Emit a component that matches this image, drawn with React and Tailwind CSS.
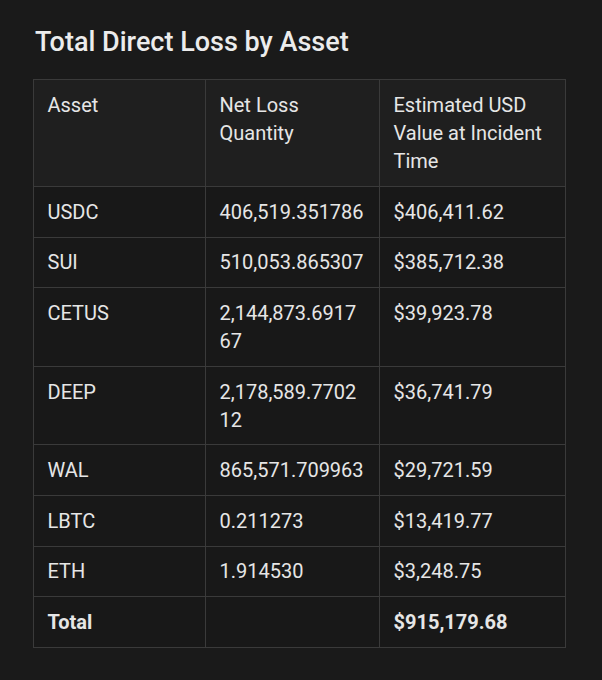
import React from 'react';

const rows = [
  { asset: 'USDC', qty: '406,519.351786', usd: '$406,411.62' },
  { asset: 'SUI', qty: '510,053.865307', usd: '$385,712.38' },
  { asset: 'CETUS', qty: '2,144,873.691767', usd: '$39,923.78' },
  { asset: 'DEEP', qty: '2,178,589.770212', usd: '$36,741.79' },
  { asset: 'WAL', qty: '865,571.709963', usd: '$29,721.59' },
  { asset: 'LBTC', qty: '0.211273', usd: '$13,419.77' },
  { asset: 'ETH', qty: '1.914530', usd: '$3,248.75' },
];

const cell = 'border border-[#3a3a3a] px-[13.5px] align-top [overflow-wrap:anywhere]';
const body = `${cell} py-[10.8px]`;

const App = () => {
  return (
    <div
      className="min-h-screen bg-[#1a1a1a] text-[#e6e6e6] pl-[33px] pr-[37px] pt-[26px]"
      style={{ fontFamily: 'Roboto, "Noto Sans", sans-serif' }}
    >
      <h2 className="text-[27px] leading-[32px] font-medium text-[#ececec] pl-[2px] mb-[21px]">
        Total Direct Loss by Asset
      </h2>
      <table className="w-[532px] table-fixed border-collapse text-[20px] leading-[28px]">
        <colgroup>
          <col className="w-[172px]" />
          <col className="w-[174px]" />
          <col className="w-[186px]" />
        </colgroup>
        <thead>
          <tr className="bg-[#1f1f1f] text-left">
            <th className={`${cell} py-[11px] font-normal`}>Asset</th>
            <th className={`${cell} py-[11px] font-normal`}>Net Loss Quantity</th>
            <th className={`${cell} py-[11px] font-normal`}>Estimated USD Value at Incident Time</th>
          </tr>
        </thead>
        <tbody className="bg-[#181818]">
          {rows.map((r) => (
            <tr key={r.asset}>
              <td className={body}>{r.asset}</td>
              <td className={body}>{r.qty}</td>
              <td className={body}>{r.usd}</td>
            </tr>
          ))}
          <tr className="font-bold">
            <td className={body}>Total</td>
            <td className={body}></td>
            <td className={body}>$915,179.68</td>
          </tr>
        </tbody>
      </table>
    </div>
  );
};

export default App;
